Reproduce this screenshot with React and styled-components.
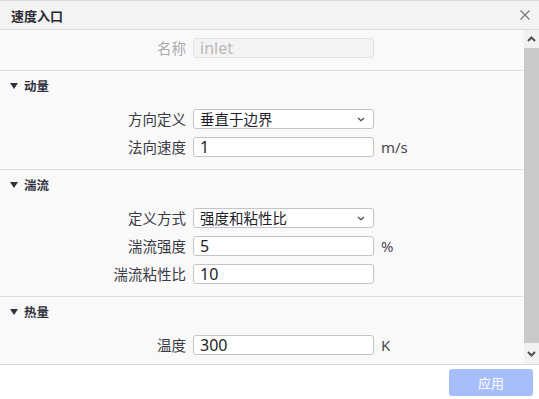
import React from "react";
import styled, { createGlobalStyle } from "styled-components";

const Global = createGlobalStyle`
  html, body { margin: 0; padding: 0; background: #fff; }
  body { font-family: "Noto Sans CJK SC", "Noto Sans", sans-serif; }
  * { box-sizing: border-box; }
`;

const Dialog = styled.div`
  width: 539px;
  height: 399px;
  display: flex;
  flex-direction: column;
  border-top: 1px solid #dcdcdc;
  background: #fff;
  overflow: hidden;
`;

const Header = styled.div`
  height: 29px;
  flex: none;
  display: flex;
  align-items: center;
  justify-content: space-between;
  padding: 0 9px 0 11px;
  background: #f3f3f3;
  border-bottom: 1px solid #d9d9d9;
`;

const Title = styled.div`
  font-size: 13px;
  font-weight: 700;
  color: #2b2b33;
  line-height: 1;
`;

const Close = styled.svg`
  width: 10px;
  height: 10px;
  display: block;
`;

const Body = styled.div`
  height: 335px;
  flex: none;
  display: flex;
  background: #f9f9f9;
  border-bottom: 1px solid #d9d9d9;
`;

const Content = styled.div`
  flex: 1;
  display: flex;
  flex-direction: column;
  overflow: hidden;
`;

const Section = styled.div`
  display: flex;
  flex-direction: column;
  gap: 8px;
  padding: ${(p) => (p.$first ? "8px 0 12px" : "0 0 12px")};
  border-bottom: ${(p) => (p.$last ? "none" : "1px solid #dedede")};
  margin-right: 1px;
`;

const SectionHead = styled.div`
  height: 28px;
  margin-bottom: 2px;
  display: flex;
  align-items: center;
  gap: 6px;
  padding-left: 10px;
  font-size: 12.5px;
  font-weight: 700;
  color: #333340;
`;

const Tri = styled.span`
  width: 0;
  height: 0;
  border-left: 4px solid transparent;
  border-right: 4px solid transparent;
  border-top: 6px solid #33333d;
  margin-top: 1px;
`;

const Row = styled.div`
  display: grid;
  grid-template-columns: 186px 181px auto;
  column-gap: 7px;
  align-items: center;
  height: 20px;
`;

const Label = styled.div`
  text-align: right;
  font-size: 14.5px;
  color: ${(p) => (p.$muted ? "#ababab" : "#3a3a44")};
  white-space: nowrap;
  line-height: 20px;
`;

const Field = styled.div`
  height: 20px;
  border: 1px solid ${(p) => (p.$disabled ? "#e2e2e2" : "#c3c3ce")};
  border-radius: 3px;
  background: ${(p) => (p.$disabled ? "#f3f3f3" : "#fff")};
  display: flex;
  align-items: center;
  justify-content: space-between;
  padding: 0 8px 0 6px;
  font-size: 16px;
  color: ${(p) => (p.$disabled ? "#b9b9b9" : "#1e1e28")};
  font-family: "Noto Sans", "Noto Sans CJK SC", sans-serif;
  line-height: 1;
`;

const CJKText = styled.span`
  font-family: "Noto Sans CJK SC", sans-serif;
  font-size: 14.5px;
`;

const Unit = styled.div`
  font-size: 15px;
  color: #4a4a56;
  font-family: "Noto Sans", sans-serif;
`;

const Scrollbar = styled.div`
  width: 15px;
  flex: none;
  display: flex;
  flex-direction: column;
  background: #f1f1f1;
`;

const ScrollBtn = styled.div`
  height: ${(p) => p.$h}px;
  flex: none;
  display: flex;
  align-items: center;
  justify-content: center;
`;

const Thumb = styled.div`
  flex: 1;
  background: #c9c9c9;
`;

const Footer = styled.div`
  flex: 1;
  display: flex;
  align-items: center;
  justify-content: flex-end;
  padding-right: 6px;
  background: #fff;
`;

const ApplyButton = styled.button`
  width: 84px;
  height: 27px;
  border: none;
  border-radius: 3px;
  background: #a8bdfc;
  color: #fff;
  font-size: 13px;
  font-family: "Noto Sans CJK SC", sans-serif;
  padding: 0;
`;

const Chevron = () => (
  <svg width="8" height="5" viewBox="0 0 8 5">
    <path d="M1 1 L4 3.8 L7 1" fill="none" stroke="#444" strokeWidth="1.2" />
  </svg>
);

const Arrow = ({ up }) => (
  <svg width="9" height="6" viewBox="0 0 9 6">
    <path
      d={up ? "M1 5 L4.5 1.5 L8 5" : "M1 1 L4.5 4.5 L8 1"}
      fill="none"
      stroke="#505050"
      strokeWidth="2"
    />
  </svg>
);

const FieldRow = ({ label, value, unit, select, disabled, muted, cjk }) => (
  <Row>
    <Label $muted={muted}>{label}</Label>
    <Field $disabled={disabled}>
      {cjk ? <CJKText>{value}</CJKText> : <span>{value}</span>}
      {select && <Chevron />}
    </Field>
    {unit ? <Unit>{unit}</Unit> : <span />}
  </Row>
);

export default function App() {
  return (
    <>
      <Global />
      <Dialog>
        <Header>
          <Title>速度入口</Title>
          <Close viewBox="0 0 10 10">
            <path d="M0.5 0.5 L9.5 9.5 M9.5 0.5 L0.5 9.5" stroke="#777" strokeWidth="1.2" />
          </Close>
        </Header>
        <Body>
          <Content>
            <Section $first>
              <FieldRow label="名称" value="inlet" disabled muted />
            </Section>
            <Section>
              <SectionHead><Tri />动量</SectionHead>
              <FieldRow label="方向定义" value="垂直于边界" select cjk />
              <FieldRow label="法向速度" value="1" unit="m/s" />
            </Section>
            <Section>
              <SectionHead><Tri />湍流</SectionHead>
              <FieldRow label="定义方式" value="强度和粘性比" select cjk />
              <FieldRow label="湍流强度" value="5" unit="%" />
              <FieldRow label="湍流粘性比" value="10" />
            </Section>
            <Section $last>
              <SectionHead><Tri />热量</SectionHead>
              <FieldRow label="温度" value="300" unit="K" />
            </Section>
          </Content>
          <Scrollbar>
            <ScrollBtn $h={18}><Arrow up /></ScrollBtn>
            <Thumb />
            <ScrollBtn $h={21}><Arrow /></ScrollBtn>
          </Scrollbar>
        </Body>
        <Footer>
          <ApplyButton>应用</ApplyButton>
        </Footer>
      </Dialog>
    </>
  );
}
